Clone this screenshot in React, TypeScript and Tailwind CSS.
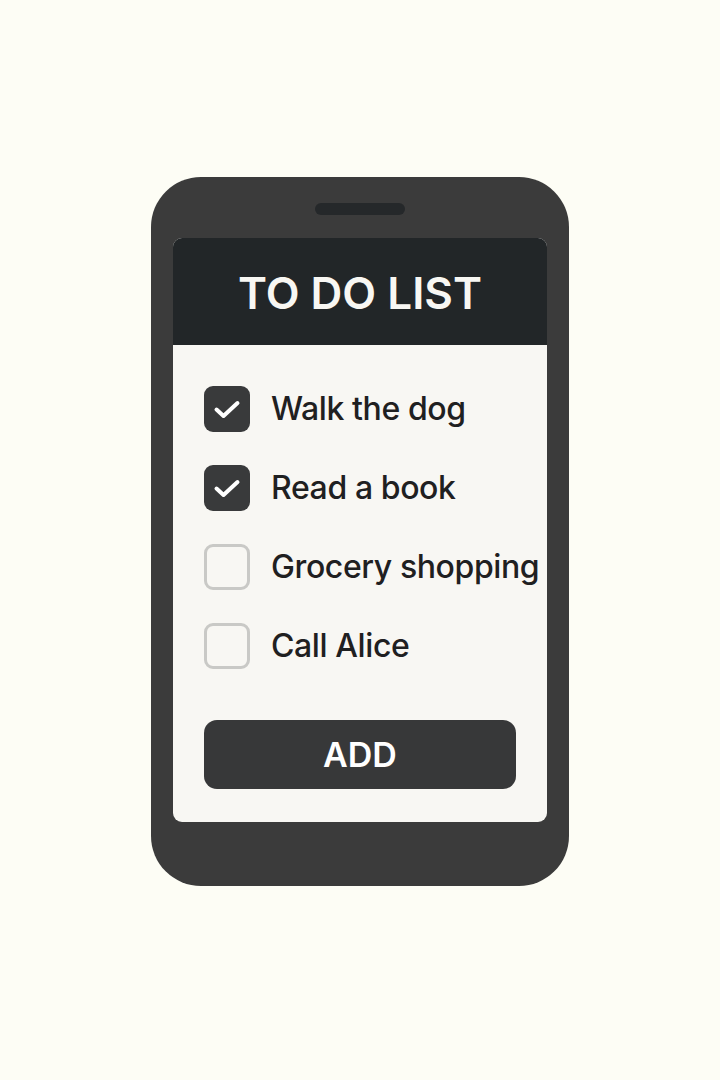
const todos = [
  { label: 'Walk the dog', done: true },
  { label: 'Read a book', done: true },
  { label: 'Grocery shopping', done: false },
  { label: 'Call Alice', done: false },
]

function Checkbox({ checked }: { checked: boolean }) {
  if (!checked) {
    return <div className="w-[46px] h-[46px] shrink-0 rounded-[9px] border-[3px] border-[#c9c9c6] bg-[#f8f7f3]" />
  }
  return (
    <div className="w-[46px] h-[46px] shrink-0 rounded-[9px] bg-[#393a3b] flex items-center justify-center">
      <svg width="46" height="46" viewBox="0 0 46 46" fill="none">
        <path d="M12.5 23.5 L19.5 30 L33.5 17" stroke="#ffffff" strokeWidth="4" strokeLinecap="round" strokeLinejoin="round" />
      </svg>
    </div>
  )
}

export default function App() {
  return (
    <div className="min-h-[1080px] w-full bg-[#fdfdf5] flex justify-center pt-[177px] font-['Inter',sans-serif]">
      <div className="w-[418px] h-[709px] rounded-[50px] bg-[#3b3b3b] flex flex-col px-[22px] pt-[26px]">
        <div className="mx-auto w-[90px] h-[12px] rounded-full bg-[#25282a]" />
        <div className="mt-[23px] h-[584px] rounded-[9px] overflow-hidden bg-[#f8f7f3] flex flex-col">
          <div className="h-[107px] bg-[#222628] flex items-center justify-center">
            <h1 className="text-[44px] font-semibold text-[#f8f7f3] leading-none pt-[2px]">TO DO LIST</h1>
          </div>
          <div className="flex-1 flex flex-col px-[31px] pt-[41px]">
            <ul className="flex flex-col gap-[33px]">
              {todos.map((t) => (
                <li key={t.label} className="flex items-center gap-[21px]">
                  <Checkbox checked={t.done} />
                  <span className="text-[32px] text-[#1f2021] leading-none font-medium whitespace-nowrap tracking-[-0.4px]">{t.label}</span>
                </li>
              ))}
            </ul>
            <button className="mt-[51px] h-[69px] w-full rounded-[13px] bg-[#373839] text-white text-[34px] font-semibold leading-none">
              ADD
            </button>
          </div>
        </div>
      </div>
    </div>
  )
}
